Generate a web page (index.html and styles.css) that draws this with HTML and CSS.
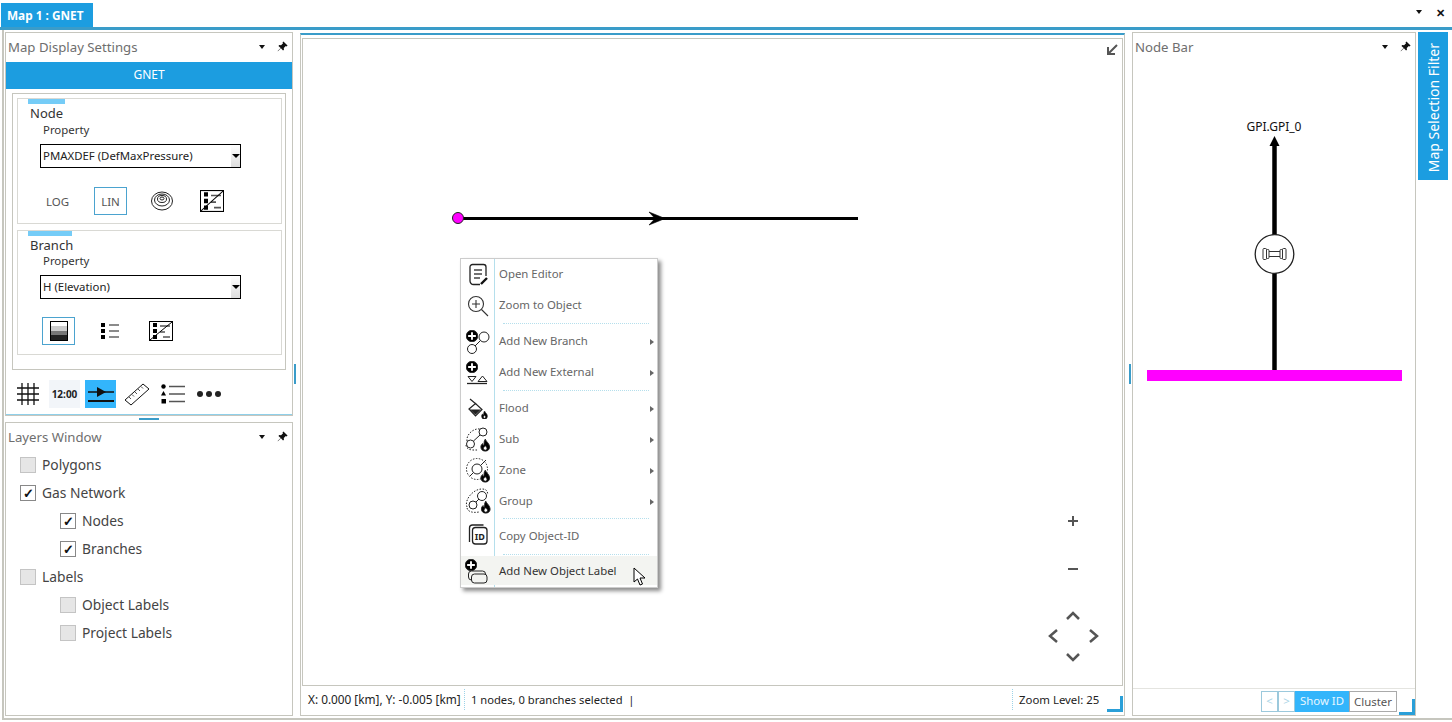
FILE: index.html
```html
<!DOCTYPE html>
<html lang="en">
<head>
    <meta charset="UTF-8">
    <title>Map 1 : GNET</title>
    <link rel="stylesheet" href="styles.css">
</head>
<body>
    <svg class="sprite" width="0" height="0">
        <symbol id="pin" viewBox="0 0 12 12">
            <path d="M7 .5 11.5 5 10.5 6 9.6 5.4 7.4 7.6 7.6 9.6 6.6 10.4 4.3 8 1 11.3.7 11 4 7.7 1.6 5.4 2.4 4.4 4.4 4.6 6.6 2.4 6 1.5z" fill="#111"/>
        </symbol>
        <symbol id="plus-badge" viewBox="0 0 14 14">
            <circle cx="7" cy="7" r="6.800" fill="#000"/>
            <path d="M7 2.500v9M2.500 7h9" stroke="#fff" stroke-width="2.200"/>
        </symbol>
        <symbol id="flame" viewBox="0 0 12 14">
            <path d="M6 0c1 3 5 5 5 9a5 5 0 0 1-10 0c0-2 1-3 2-4 0 1 .5 2 1.500 2C5 5 4 3 6 0z" fill="#000"/>
            <path d="M6 7.500c1 1 2 2 2 3.200a2 2 0 0 1-4 0C4 9.500 5 8.500 6 7.500z" fill="#fff"/>
        </symbol>
    </svg>

    <div class="tabbar">
        <div class="tab">Map 1 : GNET</div>
        <div class="tabbar-tools">
            <span class="caret"></span>
            <span class="close">✕</span>
        </div>
    </div>

    <div class="workspace">
        <div class="left-col">
            <div class="panel settings">
                <div class="panel-head">
                    <span>Map Display Settings</span>
                    <span class="caret"></span>
                    <svg class="pin"><use href="#pin"/></svg>
                </div>
                <div class="net-bar">GNET</div>
                <div class="group-frame">
                    <div class="group">
                        <div class="group-mark"></div>
                        <div class="group-title">Node</div>
                        <div class="prop-label">Property</div>
                        <div class="combo"><span>PMAXDEF (DefMaxPressure)</span><i></i></div>
                        <div class="mode-row node-modes">
                            <span class="mode">LOG</span>
                            <span class="mode on">LIN</span>
                            <span class="mode">
                                <svg width="24" height="20" viewBox="0 0 24 20" fill="none" stroke="#222">
                                    <ellipse cx="12" cy="10" rx="10.500" ry="9"/>
                                    <ellipse cx="12" cy="9" rx="7.500" ry="6"/>
                                    <ellipse cx="12" cy="8" rx="4.500" ry="3.500"/>
                                    <ellipse cx="12" cy="7.500" rx="2" ry="1.500"/>
                                </svg>
                            </span>
                            <span class="mode">
                                <svg width="24" height="22" viewBox="0 0 24 20" preserveAspectRatio="none">
                                    <rect x=".5" y=".5" width="23" height="19" fill="#fff" stroke="#000"/>
                                    <path d="M4 2h4v4H4zM4 8h4v4H4zM4 14h4v4H4z" fill="#000"/>
                                    <path d="M11 5h10M11 11h5M14 16h7" stroke="#555" stroke-width="1.500"/>
                                    <path d="M1 19 23 1" stroke="#000"/>
                                </svg>
                            </span>
                        </div>
                    </div>
                    <div class="group">
                        <div class="group-mark wide"></div>
                        <div class="group-title">Branch</div>
                        <div class="prop-label">Property</div>
                        <div class="combo"><span>H (Elevation)</span><i></i></div>
                        <div class="mode-row branch-modes">
                            <span class="mode on">
                                <svg width="18" height="20" viewBox="0 0 18 20">
                                    <rect x=".5" y=".5" width="17" height="19" fill="#fff" stroke="#000"/>
                                    <rect x="1" y="5" width="16" height="5" fill="#ccc"/>
                                    <rect x="1" y="10" width="16" height="4" fill="#777"/>
                                    <rect x="1" y="14" width="16" height="5" fill="#222"/>
                                </svg>
                            </span>
                            <span class="mode">
                                <svg width="18" height="16" viewBox="0 0 18 16">
                                    <path d="M0 0h4v4H0zM0 6h4v4H0zM0 12h4v4H0z" fill="#000"/>
                                    <path d="M8 2h10M8 8h10M8 14h10" stroke="#666" stroke-width="1.500"/>
                                </svg>
                            </span>
                            <span class="mode">
                                <svg width="24" height="20" viewBox="0 0 24 20">
                                    <rect x=".5" y=".5" width="23" height="19" fill="#fff" stroke="#000"/>
                                    <path d="M4 2h4v4H4zM4 8h4v4H4zM4 14h4v4H4z" fill="#000"/>
                                    <path d="M11 5h10M11 11h5M14 16h7" stroke="#555" stroke-width="1.500"/>
                                    <path d="M1 19 23 1" stroke="#000"/>
                                </svg>
                            </span>
                        </div>
                    </div>
                </div>
                <div class="toolbar">
                    <span class="tool">
                        <svg width="24" height="24" viewBox="0 0 24 24" stroke="#111" stroke-width="1.300">
                            <path d="M6 1v22M12 1v22M18 1v22M1 6h22M1 12h22M1 18h22"/>
                        </svg>
                    </span>
                    <span class="tool clock">12:00</span>
                    <span class="tool active">
                        <svg width="28" height="20" viewBox="0 0 28 20">
                            <path d="M1 8h26" stroke="#111" stroke-width="1.500"/>
                            <path d="M10 3 19 8 10 13z" fill="#111"/>
                            <path d="M1 17h26" stroke="#111" stroke-width="2"/>
                        </svg>
                    </span>
                    <span class="tool">
                        <svg width="26" height="24" viewBox="0 0 26 24" fill="none" stroke="#111">
                            <path d="M1 18 19 2 25 7 7 23z"/>
                            <path d="M5 15l2 2M8 12.500l2 2M11 10l2 2M14 7l2 2M17 4.500l2 2" stroke="#555"/>
                        </svg>
                    </span>
                    <span class="tool">
                        <svg width="24" height="20" viewBox="0 0 24 20">
                            <circle cx="2.500" cy="2.500" r="2.200" fill="#000"/>
                            <path d="M2.500 7 5 11.500H0z" fill="#000"/>
                            <path d="M.5 15h4.500v4.500H.5z" fill="#000"/>
                            <path d="M8 2.500h16M8 10h16M8 17.500h16" stroke="#555" stroke-width="1.600"/>
                        </svg>
                    </span>
                    <span class="tool dots"><i></i><i></i><i></i></span>
                </div>
            </div>
            <div class="h-splitter"><i></i></div>
            <div class="panel layers">
                <div class="panel-head">
                    <span>Layers Window</span>
                    <span class="caret"></span>
                    <svg class="pin"><use href="#pin"/></svg>
                </div>
                <ul class="layer-list">
                    <li><span class="check off"></span>Polygons</li>
                    <li><span class="check">✓</span>Gas Network</li>
                    <li class="sub"><span class="check">✓</span>Nodes</li>
                    <li class="sub"><span class="check">✓</span>Branches</li>
                    <li><span class="check off"></span>Labels</li>
                    <li class="sub"><span class="check off"></span>Object Labels</li>
                    <li class="sub"><span class="check off"></span>Project Labels</li>
                </ul>
            </div>
        </div>

        <div class="v-splitter"><i></i></div>

        <div class="map-pane">
            <div class="map-view">
                <svg class="map-canvas" viewBox="303 39 820 647">
                    <path d="M462 218.500H858" stroke="#000" stroke-width="3"/>
                    <path d="M649 212 665 218.500 649 225 655 218.500z" fill="#000" stroke="#000" stroke-width=".6"/>
                    <circle cx="458" cy="218" r="5.500" fill="#f0f" stroke="#222"/>
                    <path d="M1117 45 1108 54M1108 47V54H1115" fill="none" stroke="#555" stroke-width="2"/>
                    <path d="M1068 521h10M1073 516v10M1068 569h10" fill="none" stroke="#555" stroke-width="2"/>
                    <path d="M1067 619 1073 613 1079 619M1067 654 1073 660 1079 654M1057 630 1050 636 1057 642M1090 630 1097 636 1090 642" fill="none" stroke="#555" stroke-width="2.500"/>
                </svg>
                <div class="ctx-menu">
                    <div class="ctx-item">
                        <svg class="ctx-icon" viewBox="0 0 34 31" fill="none" stroke="#222" stroke-width="1.300">
                            <path d="M25 17V8a2.500 2.500 0 0 0-2.500-2.500h-11A2.500 2.500 0 0 0 9 8v14a3.500 3.500 0 0 0 3.500 3.500H19"/>
                            <path d="M13 11h8M13 15h8M13 19h6" stroke="#444"/>
                            <path d="M20 25l6-6" stroke="#111" stroke-width="2.400"/>
                        </svg>
                        <span>Open Editor</span>
                    </div>
                    <div class="ctx-item">
                        <svg class="ctx-icon" viewBox="0 0 34 31" fill="none" stroke="#333" stroke-width="1.100">
                            <circle cx="15" cy="14" r="7.500"/>
                            <path d="M15 10v8M11 14h8"/>
                            <path d="M20.500 19.500 27 26"/>
                        </svg>
                        <span>Zoom to Object</span>
                    </div>
                    <div class="ctx-sep"></div>
                    <div class="ctx-item has-sub">
                        <svg class="ctx-icon" viewBox="0 0 34 31" fill="none" stroke="#222">
                            <use href="#plus-badge" x="5" y="4" width="12" height="12"/>
                            <circle cx="23" cy="11" r="5"/>
                            <circle cx="11" cy="23" r="4.500"/>
                            <path d="M14 20 19.500 14.500"/>
                        </svg>
                        <span>Add New Branch</span>
                    </div>
                    <div class="ctx-item has-sub">
                        <svg class="ctx-icon" viewBox="0 0 34 31" fill="none" stroke="#222">
                            <use href="#plus-badge" x="5" y="4" width="12" height="12"/>
                            <path d="M7 19.500h8l-4 5zM17 24.500l4.500-5.500 4.500 5.500z"/>
                            <path d="M6 26.500h20" stroke-width="1.300"/>
                        </svg>
                        <span>Add New External</span>
                    </div>
                    <div class="ctx-sep"></div>
                    <div class="ctx-item has-sub">
                        <svg class="ctx-icon" viewBox="0 0 34 31" fill="none" stroke="#222" stroke-width="1.200">
                            <path d="M9 6 15 11"/>
                            <path d="M8 16 14.500 10.500 21 16.500 14.500 23z"/>
                            <path d="M10.500 17H18.500L14.500 21z" fill="#222"/>
                            <use href="#flame" x="20" y="18" width="7" height="8"/>
                        </svg>
                        <span>Flood</span>
                    </div>
                    <div class="ctx-item has-sub">
                        <svg class="ctx-icon" viewBox="0 0 34 31" fill="none" stroke="#222">
                            <path d="M6 17C5 11 12 4 19 5" stroke-dasharray="1.500 1.500"/>
                            <path d="M5 21c0 3 3 5 7 5h5" stroke-dasharray="1.500 1.500"/>
                            <circle cx="22" cy="8" r="4"/>
                            <circle cx="9.500" cy="20" r="4"/>
                            <path d="M12.500 17 19 11"/>
                            <use href="#flame" x="19" y="15" width="10.500" height="12.500"/>
                        </svg>
                        <span>Sub</span>
                    </div>
                    <div class="ctx-item has-sub">
                        <svg class="ctx-icon" viewBox="0 0 34 31" fill="none" stroke="#222">
                            <circle cx="16" cy="14" r="10.500" stroke-dasharray="1.500 1.500"/>
                            <circle cx="16" cy="14" r="5"/>
                            <path d="M9 21 12.500 17.500M19.500 10.500 25 5"/>
                            <use href="#flame" x="19" y="15" width="10.500" height="12.500"/>
                        </svg>
                        <span>Zone</span>
                    </div>
                    <div class="ctx-item has-sub group-row">
                        <svg class="ctx-icon" viewBox="0 0 34 30" fill="none" stroke="#222">
                            <path d="M6 21C3 14 12 3 21 3c5 0 6 3 5.500 6" stroke-dasharray="1.500 1.500"/>
                            <path d="M6 22c1 4 6 5 12 4" stroke-dasharray="1.500 1.500"/>
                            <circle cx="21" cy="10" r="4.500"/>
                            <circle cx="12" cy="19" r="4"/>
                            <path d="M15 16 18 13"/>
                            <use href="#flame" x="19.500" y="15" width="10.500" height="12.500"/>
                        </svg>
                        <span>Group</span>
                    </div>
                    <div class="ctx-sep"></div>
                    <div class="ctx-item">
                        <svg class="ctx-icon" viewBox="0 0 34 31" fill="none" stroke="#222" stroke-width="1.300">
                            <path d="M8.500 21V7a3 3 0 0 1 3-3h11"/>
                            <rect x="11.500" y="6.500" width="14.500" height="16.500" rx="3" fill="#fff"/>
                            <text x="18.800" y="18.500" class="id-glyph">ID</text>
                        </svg>
                        <span>Copy Object-ID</span>
                    </div>
                    <div class="ctx-sep short"></div>
                    <div class="ctx-item hover">
                        <svg class="ctx-icon" viewBox="0 0 34 29" fill="none" stroke="#222">
                            <use href="#plus-badge" x="4" y="3" width="12" height="12"/>
                            <rect x="7.500" y="15" width="17" height="9" rx="3"/>
                            <rect x="10.500" y="18" width="15.500" height="9" rx="3" fill="#f3f4f1"/>
                        </svg>
                        <span>Add New Object Label</span>
                        <svg class="pointer" width="14" height="19" viewBox="0 0 14 19">
                            <path d="M1 1V15L4.500 12 7 18 9.500 17 7 11H12z" fill="#fff" stroke="#000"/>
                        </svg>
                    </div>
                </div>
            </div>
            <div class="status-bar">
                <span class="cell coords">X: 0.000 [km], Y: -0.005 [km]</span>
                <span class="cell sel">1 nodes, 0 branches selected&nbsp; |</span>
                <span class="cell zoom">Zoom Level: 25</span>
                <span class="grip"></span>
            </div>
        </div>

        <div class="v-splitter after-map"><i></i></div>

        <div class="panel node-bar">
            <div class="panel-head">
                <span>Node Bar</span>
                <span class="caret"></span>
                <svg class="pin"><use href="#pin"/></svg>
            </div>
            <div class="node-view">
                <svg class="node-canvas" viewBox="1133 62 281 626">
                    <text x="1274" y="131" class="node-name">GPI.GPI_0</text>
                    <path d="M1274.500 145V370" stroke="#000" stroke-width="4.500"/>
                    <path d="M1274.500 136 1279.500 146H1269.500z" fill="#000"/>
                    <rect x="1147" y="370" width="255" height="11" fill="#f0f"/>
                    <circle cx="1274.500" cy="254" r="19.300" fill="#fff" stroke="#222" stroke-width="1.300"/>
                    <g fill="none" stroke="#333">
                        <rect x="1263" y="248.500" width="3.500" height="11" rx="1"/>
                        <rect x="1266.500" y="249.500" width="2.500" height="9" rx="1"/>
                        <rect x="1282.500" y="248.500" width="3.500" height="11" rx="1"/>
                        <rect x="1280" y="249.500" width="2.500" height="9" rx="1"/>
                        <path d="M1269 251.500H1280M1269 256.500H1280"/>
                    </g>
                </svg>
            </div>
            <div class="node-foot">
                <div class="btn-group">
                    <span class="nav-btn">&lt;</span>
                    <span class="nav-btn">&gt;</span>
                    <span class="txt-btn on">Show ID</span>
                    <span class="txt-btn">Cluster</span>
                </div>
                <span class="grip"></span>
            </div>
        </div>

        <div class="side-strip">
            <div class="side-tab"><span>Map Selection Filter</span></div>
        </div>
    </div>
</body>
</html>
```

FILE: styles.css
```css
* { box-sizing: border-box; }
html, body { margin: 0; height: 100%; }
body { width: 1452px; height: 722px; overflow: hidden; background: #fff; display: flex; flex-direction: column; font-family: "Noto Sans", "Open Sans", sans-serif; font-size: 12px; color: #333; }
.sprite { position: absolute; }

.tabbar { height: 30px; flex: none; display: flex; justify-content: space-between; align-items: flex-end; border-bottom: 3px solid #3a9cc9; padding-left: 1px; }
.tab { width: 92px; height: 24px; background: #1c9de0; color: #fff; font-weight: 700; font-size: 11.800px; line-height: 24px; padding-left: 6px; }
.tabbar-tools { display: flex; align-items: center; gap: 14px; height: 27px; padding-right: 7px; padding-bottom: 3px; }
.close { font-size: 11px; font-weight: 700; color: #111; line-height: 1; }
.caret { width: 0; height: 0; border: 3px solid transparent; border-top: 4px solid #111; border-bottom: 0; }

.workspace { flex: 1; margin: 0 0 2px 2px; display: flex; border-left: 2px solid #c6c6be; border-bottom: 2px solid #c6c6be; padding: 2px 0 2px 1px; min-height: 0; }
.left-col { width: 288px; flex: none; display: flex; flex-direction: column; }

.panel { border: 1px solid #c6c6be; background: #fff; }
.panel-head { height: 29px; display: flex; align-items: center; padding: 0 4px 2px 2px; color: #6e6e6e; font-size: 13.200px; }
.panel-head span:first-child { flex: 1; }
.panel-head .pin { width: 11px; height: 11px; margin-left: 12px; }

.settings { height: 384px; flex: none; display: flex; flex-direction: column; }
.net-bar { height: 27px; background: #1c9de0; color: #fff; text-align: center; line-height: 26px; font-size: 12px; }
.group-frame { margin: 4px 6px 0; height: 277px; border: 1px solid #c6c6be; padding: 4px 3px 4px 4px; display: flex; flex-direction: column; gap: 6px; }
.group { position: relative; border: 1px solid #d9d9d4; height: 126px; padding: 6px 12px 0; }
.group + .group { height: 125px; }
.group-mark { position: absolute; left: 10px; top: 0; width: 37px; height: 5px; background: #75ccf7; }
.group-mark.wide { width: 44px; }
.group-title { font-size: 13px; line-height: 16px; color: #333; }
.prop-label { margin-left: 13px; font-size: 11.400px; line-height: 17px; color: #333; }
.group + .group .prop-label { line-height: 15px; }
.combo { margin: 6px 0 0 10px; width: 201px; height: 24px; border: 1px solid #000; display: flex; justify-content: space-between; align-items: center; padding-left: 2px; font-size: 11.400px; color: #222; position: relative; }
.combo span { padding-bottom: 2px; }
.group + .group .combo { margin-top: 7px; }
.combo i { width: 9px; align-self: stretch; background: linear-gradient(#fff, #ddd); position: relative; }
.combo i::after { content: ""; position: absolute; left: 1px; top: 9px; border: 4px solid transparent; border-top: 4px solid #000; border-bottom: 0; }
.mode-row { display: flex; align-items: center; margin-top: 19px; }
.mode { width: 33px; height: 28px; display: flex; align-items: center; justify-content: center; font-size: 11.500px; color: #555; }
.mode.on { border: 1px solid #4ba3cf; }
.node-modes { margin-left: 11px; gap: 20px; }
.node-modes .mode:nth-child(3) { margin-left: -2px; }
.node-modes .mode:nth-child(4) { margin-left: -3px; }
.branch-modes { margin-left: 12px; margin-top: 18px; gap: 18px; }

.toolbar { flex: 1; display: flex; align-items: center; padding: 4px 7px 0 9px; border-bottom: 1px solid #8fd0ea; gap: 5px; }
.tool { width: 31px; height: 28px; display: flex; align-items: center; justify-content: center; }
.tool:first-child { margin: 0 1px 0 -3px; }
.tool.clock { background: #f2f5f9; font-size: 10px; font-weight: 700; color: #222; }
.tool.active { background: #33b5fb; }
.tool.dots { gap: 3px; }
.dots i { width: 6px; height: 6px; border-radius: 50%; background: #222; }

.h-splitter { height: 6px; flex: none; display: flex; justify-content: center; align-items: center; }
.h-splitter i { width: 20px; height: 2px; background: #3a9cc9; }
.layers { flex: 1; }
.layer-list { list-style: none; margin: -1px 0 0; padding: 0 0 0 14px; }
.layer-list li { height: 28px; padding-bottom: 2px; display: flex; align-items: center; gap: 6px; font-size: 13.800px; color: #444; }
.layer-list li.sub { padding-left: 40px; }
.check { width: 16px; height: 16px; margin-top: 1px; border: 1px solid #888; font-size: 13px; line-height: 14px; text-align: center; color: #111; font-weight: 700; background: #fff; }
.check.off { background: #e6e6e6; border-color: #c4c4c4; }

.v-splitter { width: 7px; flex: none; display: flex; align-items: center; }
.v-splitter i { width: 2px; height: 20px; margin-left: 1px; background: #3a9cc9; }
.after-map i { margin-left: 4px; }

.map-pane { width: 825px; flex: none; margin-top: 1px; border: 1px solid #c6c6be; border-top: 2px solid #3a9cc9; padding: 3px 1px 3px 1px; display: flex; flex-direction: column; }
.map-view { flex: 1; border: 1px solid #c6c6be; position: relative; min-height: 0; }
.map-canvas { display: block; width: 820px; height: 647px; }
.status-bar { height: 24px; margin-top: 2px; padding-bottom: 2px; flex: none; display: flex; align-items: center; position: relative; font-size: 11.200px; color: #222; }
.cell { padding: 0 6px; line-height: 21px; white-space: nowrap; }
.coords { width: 163px; border-right: 1px dotted #9cd3e8; font-size: 11.800px; }
.sel { flex: 1; }
.zoom { width: 111px; border-left: 1px dotted #9cd3e8; padding-left: 6px; font-size: 11.400px; }
.grip { position: absolute; right: 0; bottom: 0; width: 16px; height: 16px; border-right: 3px solid #2a9fd8; border-bottom: 3px solid #2a9fd8; }

.ctx-menu { position: absolute; left: 157px; top: 219px; width: 198px; border: 1px solid #ccc; box-shadow: 3px 3px 4px rgba(0, 0, 0, .45); background: linear-gradient(to right, #fff 33px, #b5dfec 33px, #b5dfec 34px, #fff 34px); color: #666; font-size: 11.400px; }
.ctx-item { height: 31px; display: flex; align-items: center; position: relative; }
.ctx-item.group-row { height: 30px; }
.ctx-item.has-sub::after { content: ""; position: absolute; right: 3px; top: 13px; border: 3px solid transparent; border-left: 4px solid #666; border-right: 0; }
.ctx-icon { width: 34px; height: 100%; flex: none; }
.ctx-item span { margin: 0 0 2px 4px; }
.ctx-sep { height: 5px; margin: 0 8px 0 42px; border-top: 1px dotted #b5dfec; transform: translateY(2px); }
.ctx-sep.short { height: 4px; }
.ctx-item.hover { background: #f3f4f1; color: #333; height: 29px; margin-bottom: 2px; }
.ctx-item.hover span { margin-bottom: 0; }
.pointer { position: absolute; left: 172px; top: 11px; }
.id-glyph { font-size: 9px; font-weight: 700; text-anchor: middle; fill: #222; stroke: none; }

.node-bar { width: 284px; flex: none; display: flex; flex-direction: column; position: relative; }
.node-view { flex: 1; min-height: 0; }
.node-canvas { display: block; width: 281px; height: 626px; }
.node-name { font-size: 12px; text-anchor: middle; fill: #111; }
.node-foot { height: 27px; border-top: 1px solid #e4e4e0; flex: none; position: relative; padding: 2px 0 0 128px; }
.btn-group { display: flex; height: 21px; font-size: 11.400px; }
.nav-btn { width: 17px; border: 1px solid #9cc9dc; color: #a9d4e6; text-align: center; line-height: 18px; }
.txt-btn { width: 54px; line-height: 20px; text-align: center; }
.txt-btn.on { background: #33b5fb; color: #e8f7ff; }
.txt-btn:last-child { width: 48px; border: 1px solid #aaa; color: #555; }

.side-strip { width: 33px; flex: none; padding-left: 2px; }
.side-tab { width: 30px; height: 148px; padding-top: 3px; background: #1c9de0; color: #fff; display: flex; align-items: center; justify-content: center; }
.side-tab span { writing-mode: vertical-rl; transform: rotate(180deg); font-size: 14px; white-space: nowrap; }
```
